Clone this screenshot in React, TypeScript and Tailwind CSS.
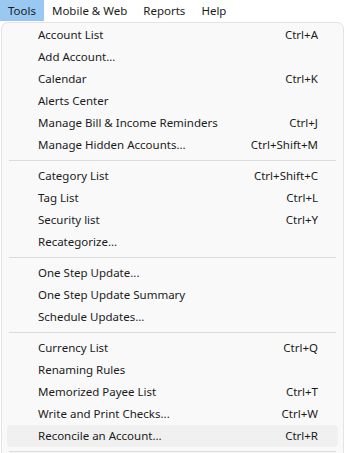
import React from 'react';

type Item = { label: string; shortcut?: string; hover?: boolean };

const groups: Item[][] = [
  [
    { label: 'Account List', shortcut: 'Ctrl+A' },
    { label: 'Add Account...' },
    { label: 'Calendar', shortcut: 'Ctrl+K' },
    { label: 'Alerts Center' },
    { label: 'Manage Bill & Income Reminders', shortcut: 'Ctrl+J' },
    { label: 'Manage Hidden Accounts...', shortcut: 'Ctrl+Shift+M' },
  ],
  [
    { label: 'Category List', shortcut: 'Ctrl+Shift+C' },
    { label: 'Tag List', shortcut: 'Ctrl+L' },
    { label: 'Security list', shortcut: 'Ctrl+Y' },
    { label: 'Recategorize...' },
  ],
  [
    { label: 'One Step Update...' },
    { label: 'One Step Update Summary' },
    { label: 'Schedule Updates...' },
  ],
  [
    { label: 'Currency List', shortcut: 'Ctrl+Q' },
    { label: 'Renaming Rules' },
    { label: 'Memorized Payee List', shortcut: 'Ctrl+T' },
    { label: 'Write and Print Checks...', shortcut: 'Ctrl+W' },
    { label: 'Reconcile an Account...', shortcut: 'Ctrl+R', hover: true },
  ],
];

const menus = ['Tools', 'Mobile & Web', 'Reports', 'Help'];

export default function App() {
  return (
    <div className="w-[345px] h-[453px] overflow-hidden bg-white text-[#1b1b1b] text-[11.5px] font-['Noto_Sans',sans-serif]">
      {/* menu bar */}
      <div className="flex h-[21px] items-center">
        {menus.map((m, i) => (
          <div
            key={m}
            className={
              i === 0
                ? 'h-full flex items-center px-2 bg-[#99c9f3]'
                : 'h-full flex items-center px-2'
            }
          >
            {m}
          </div>
        ))}
      </div>

      {/* dropdown */}
      <div className="ml-[1px] mt-[1px] w-[343px] rounded-t-[7px] border border-[#e3e3e3] bg-[#f9f9f9] pt-[1px] pb-2">
        {groups.map((g, gi) => (
          <div key={gi}>
            {gi > 0 && (
              <div className="h-[9px] flex items-center mx-[7px]">
                <div className="h-px w-full bg-[#dcdcdc]" />
              </div>
            )}
            {g.map((it) => (
              <div
                key={it.label}
                className={
                  'h-[22px] mx-[5px] flex items-center justify-between pl-[31px] pr-[20px] rounded-[4px]' +
                  (it.hover ? ' bg-[#f0f0f0]' : '')
                }
              >
                <span>{it.label}</span>
                {it.shortcut && <span>{it.shortcut}</span>}
              </div>
            ))}
          </div>
        ))}
        <div className="h-[9px] flex items-center mx-[7px]">
          <div className="h-px w-full bg-[#dcdcdc]" />
        </div>
      </div>
    </div>
  );
}
